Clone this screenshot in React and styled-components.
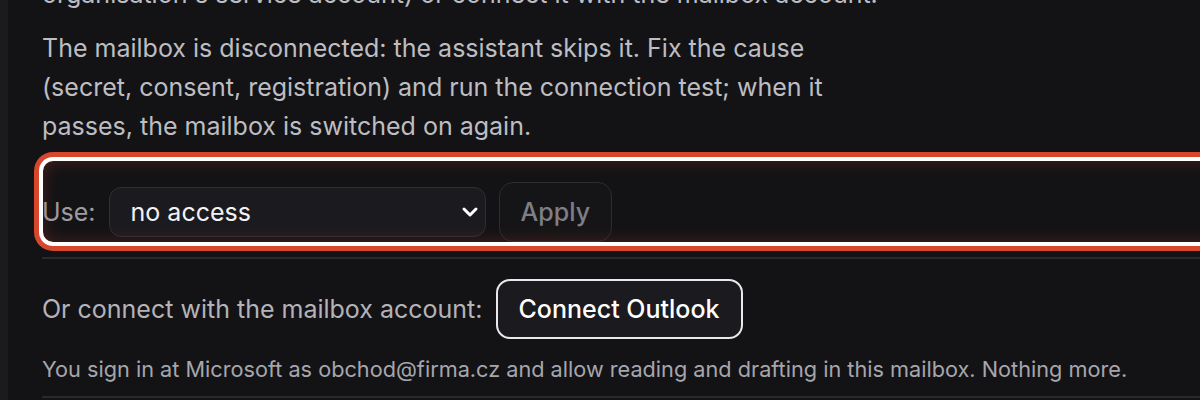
import React from "react";
import styled, { createGlobalStyle } from "styled-components";

const Global = createGlobalStyle`
  html, body { margin: 0; padding: 0; background: #131316; overflow: hidden; }
  body { font-family: Inter, "Noto Sans", sans-serif; -webkit-font-smoothing: antialiased; }
  * { box-sizing: border-box; }
`;

const Page = styled.div`
  display: grid;
  grid-template-columns: 8px 1fr;
  width: 1200px;
  height: 400px;
  overflow: hidden;
  background: #131316;
`;

const Rail = styled.div`
  background: #1b1b1e;
`;

const Main = styled.main`
  padding-left: 34px;
  width: 1400px;
  display: flex;
  flex-direction: column;
`;

const Para = styled.p`
  margin: 0 0 15px;
  max-width: 800px;
  font-size: 25px;
  line-height: 39px;
  color: #bdbdc2;
  &:first-child { margin-top: -25px; max-width: none; white-space: nowrap; }
`;

const FieldRow = styled.div`
  position: relative;
  display: flex;
  align-items: center;
  gap: 13px;
  height: 81px;
  padding-top: 21px;
  margin-bottom: 15px;
`;

const Highlight = styled.div`
  position: absolute;
  top: 0;
  bottom: 0;
  left: 1px;
  right: 0;
  border-radius: 10px;
  pointer-events: none;
  box-shadow: 0 0 0 4px #ffffff, 0 0 0 9px #d6472c,
    inset 0 0 16px rgba(214, 71, 44, 0.28);
`;

const Label = styled.span`
  font-size: 25px;
  color: ${(p) => p.$color || "#9c9ca2"};
  white-space: nowrap;
`;

const SelectWrap = styled.div`
  position: relative;
  width: 377px;
  height: 50px;
`;

const Select = styled.select`
  appearance: none;
  width: 100%;
  height: 100%;
  padding: 0 40px 0 21px;
  border: 1px solid #2f2f35;
  border-radius: 12px;
  background: #1b1b1f;
  color: #f2f2f4;
  font-family: inherit;
  font-size: 25px;
  outline: none;
`;

const Chevron = styled.svg`
  position: absolute;
  right: 7px;
  top: 50%;
  transform: translateY(-50%);
  pointer-events: none;
`;

const Button = styled.button`
  height: 60px;
  padding: 0 21px;
  border-radius: 14px;
  font-family: inherit;
  font-size: 25px;
  font-weight: 500;
  white-space: nowrap;
  border: ${(p) => (p.$primary ? "2px solid #e9e9ec" : "1px solid #2c2c31")};
  background: ${(p) => (p.$primary ? "#1b1b1f" : "#151518")};
  color: ${(p) => (p.$primary ? "#ffffff" : "#7e7e86")};
`;

const Divider = styled.hr`
  margin: 0;
  border: none;
  border-top: 2px solid #29292d;
`;

const ConnectRow = styled.div`
  display: flex;
  align-items: center;
  gap: 13px;
  margin-top: 20px;
`;

const Note = styled.p`
  margin: 13px 0 10px;
  font-size: 21.7px;
  line-height: 34px;
  color: #a6a6ac;
  white-space: nowrap;
`;

export default function App() {
  return (
    <>
      <Global />
      <Page>
        <Rail />
        <Main>
          <Para>organisation's service account) or connect it with the mailbox account.</Para>
          <Para>
            The mailbox is disconnected: the assistant skips it. Fix the cause
            (secret, consent, registration) and run the connection test; when it
            passes, the mailbox is switched on again.
          </Para>
          <FieldRow>
            <Label>Use:</Label>
            <SelectWrap>
              <Select defaultValue="none">
                <option value="none">no access</option>
                <option value="service">service account</option>
              </Select>
              <Chevron width="18" height="12" viewBox="0 0 18 12" fill="none">
                <path d="M3 3l6 6 6-6" stroke="#ffffff" strokeWidth="3" strokeLinecap="round" strokeLinejoin="round" />
              </Chevron>
            </SelectWrap>
            <Button disabled>Apply</Button>
            <Highlight />
          </FieldRow>
          <Divider />
          <ConnectRow>
            <Label $color="#b3b3b8">Or connect with the mailbox account:</Label>
            <Button $primary>Connect Outlook</Button>
          </ConnectRow>
          <Note>
            You sign in at Microsoft as obchod@firma.cz and allow reading and drafting in this mailbox. Nothing more.
          </Note>
          <Divider />
        </Main>
      </Page>
    </>
  );
}
